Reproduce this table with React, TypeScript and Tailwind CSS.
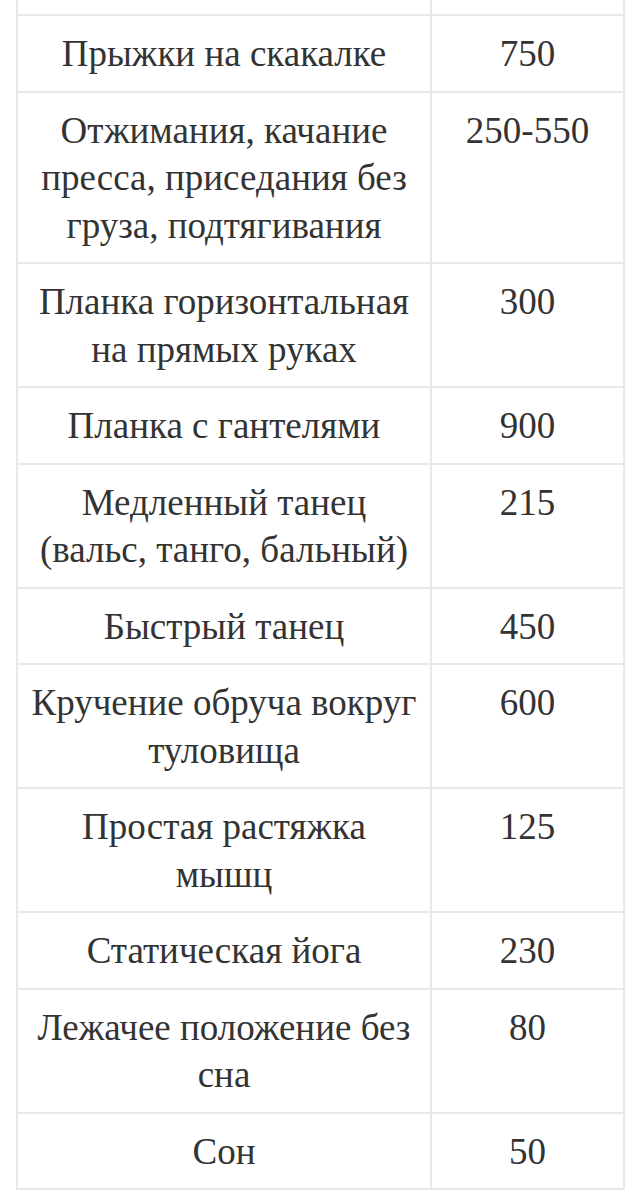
import React from "react";

type Row = {
  name: string[];
  kcal: string;
};

const rows: Row[] = [
  { name: ["Прыжки на скакалке"], kcal: "750" },
  { name: ["Отжимания, качание", "пресса, приседания без", "груза, подтягивания"], kcal: "250-550" },
  { name: ["Планка горизонтальная", "на прямых руках"], kcal: "300" },
  { name: ["Планка с гантелями"], kcal: "900" },
  { name: ["Медленный танец", "(вальс, танго, бальный)"], kcal: "215" },
  { name: ["Быстрый танец"], kcal: "450" },
  { name: ["Кручение обруча вокруг", "туловища"], kcal: "600" },
  { name: ["Простая растяжка", "мышц"], kcal: "125" },
  { name: ["Статическая йога"], kcal: "230" },
  { name: ["Лежачее положение без", "сна"], kcal: "80" },
  { name: ["Сон"], kcal: "50" },
];

const cell =
  "border-2 border-[#e9e9e9] pt-[14px] pb-[13px] px-[8px] align-top text-center";

export default function App() {
  return (
    <div className="bg-white w-[637px] min-h-[1200px] pl-[16px]">
      <table
        className="w-[609px] border-collapse text-[#333] text-[37px] leading-[47.5px]"
        style={{ fontFamily: '"Liberation Serif", "DejaVu Serif", serif' }}
      >
        <tbody>
          <tr>
            <td className="w-[414px] h-[15px] border-2 border-t-0 border-[#e9e9e9] p-0" />
            <td className="h-[15px] border-2 border-t-0 border-[#e9e9e9] p-0" />
          </tr>
          {rows.map((r, i) => (
            <tr key={i}>
              <td className={cell}>
                {r.name.map((line, j) => (
                  <div key={j} className="whitespace-nowrap">
                    {line}
                  </div>
                ))}
              </td>
              <td className={cell}>{r.kcal}</td>
            </tr>
          ))}
        </tbody>
      </table>
    </div>
  );
}
